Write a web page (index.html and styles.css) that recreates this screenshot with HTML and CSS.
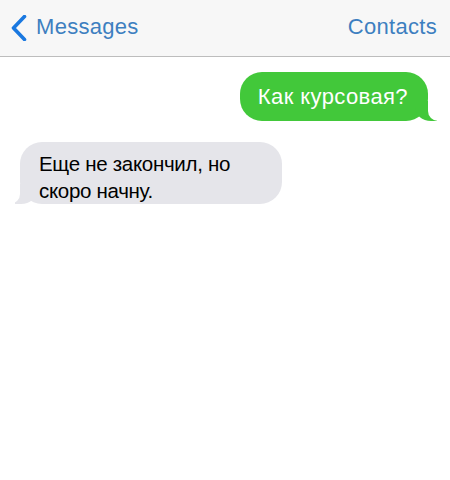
FILE: index.html
```html
<!DOCTYPE html>
<html lang="ru">
<head>
<meta charset="utf-8">
<link rel="stylesheet" href="styles.css">
</head>
<body>
<header class="nav">
  <div class="nav-back">
    <svg class="chevron" width="16" height="26" viewBox="0 0 16 26">
      <path d="M13.5 1.5 L2.5 13 L13.5 24.5" fill="none" stroke="#1a78e0" stroke-width="3.6" stroke-linecap="round" stroke-linejoin="round"/>
    </svg>
    <span class="nav-label">Messages</span>
  </div>
  <span class="nav-label">Contacts</span>
</header>
<main class="thread">
  <div class="bubble sent">Как курсовая?</div>
  <div class="bubble received">Еще не закончил, но скоро начну.</div>
</main>
</body>
</html>
```

FILE: styles.css
```css
html, body {
  margin: 0;
  padding: 0;
  background: #ffffff;
  font-family: "Liberation Sans", Arial, sans-serif;
}

.nav {
  height: 57px;
  box-sizing: border-box;
  padding: 14px 13px 0 11px;
  background: #f7f7f7;
  border-bottom: 1px solid #bdbdbd;
  display: flex;
  justify-content: space-between;
  align-items: flex-start;
}

.nav-back {
  display: flex;
  align-items: flex-start;
  gap: 9px;
}

.chevron {
  margin-top: 1px;
}

.nav-label {
  font-size: 22px;
  line-height: 26px;
  color: #3d7fc0;
  letter-spacing: 0.3px;
}

.thread {
  display: flex;
  flex-direction: column;
  padding: 15px 22px 0 20px;
}

.bubble {
  position: relative;
  border-radius: 22px;
  box-sizing: border-box;
}

.sent {
  align-self: flex-end;
  background: #42c83a;
  color: #ffffff;
  font-size: 22px;
  letter-spacing: 0.4px;
  line-height: 26px;
  padding: 12px 20px 11px 18px;
}

.sent::before {
  content: "";
  position: absolute;
  right: -9px;
  bottom: 0;
  width: 22px;
  height: 20px;
  background: #42c83a;
  border-bottom-left-radius: 16px 14px;
}

.sent::after {
  content: "";
  position: absolute;
  right: -26px;
  bottom: 0;
  width: 26px;
  height: 20px;
  background: #ffffff;
  border-bottom-left-radius: 10px;
}

.received {
  align-self: flex-start;
  margin-top: 21px;
  width: 262px;
  background: #e5e5ea;
  color: #000000;
  font-size: 20.5px;
  letter-spacing: -0.3px;
  line-height: 27px;
  padding: 8px 19px 0 19px;
}

.received::before {
  content: "";
  position: absolute;
  left: -5px;
  bottom: 0;
  width: 22px;
  height: 20px;
  background: #e5e5ea;
  border-bottom-right-radius: 16px 14px;
}

.received::after {
  content: "";
  position: absolute;
  left: -26px;
  bottom: 0;
  width: 26px;
  height: 20px;
  background: #ffffff;
  border-bottom-right-radius: 10px;
}
```
